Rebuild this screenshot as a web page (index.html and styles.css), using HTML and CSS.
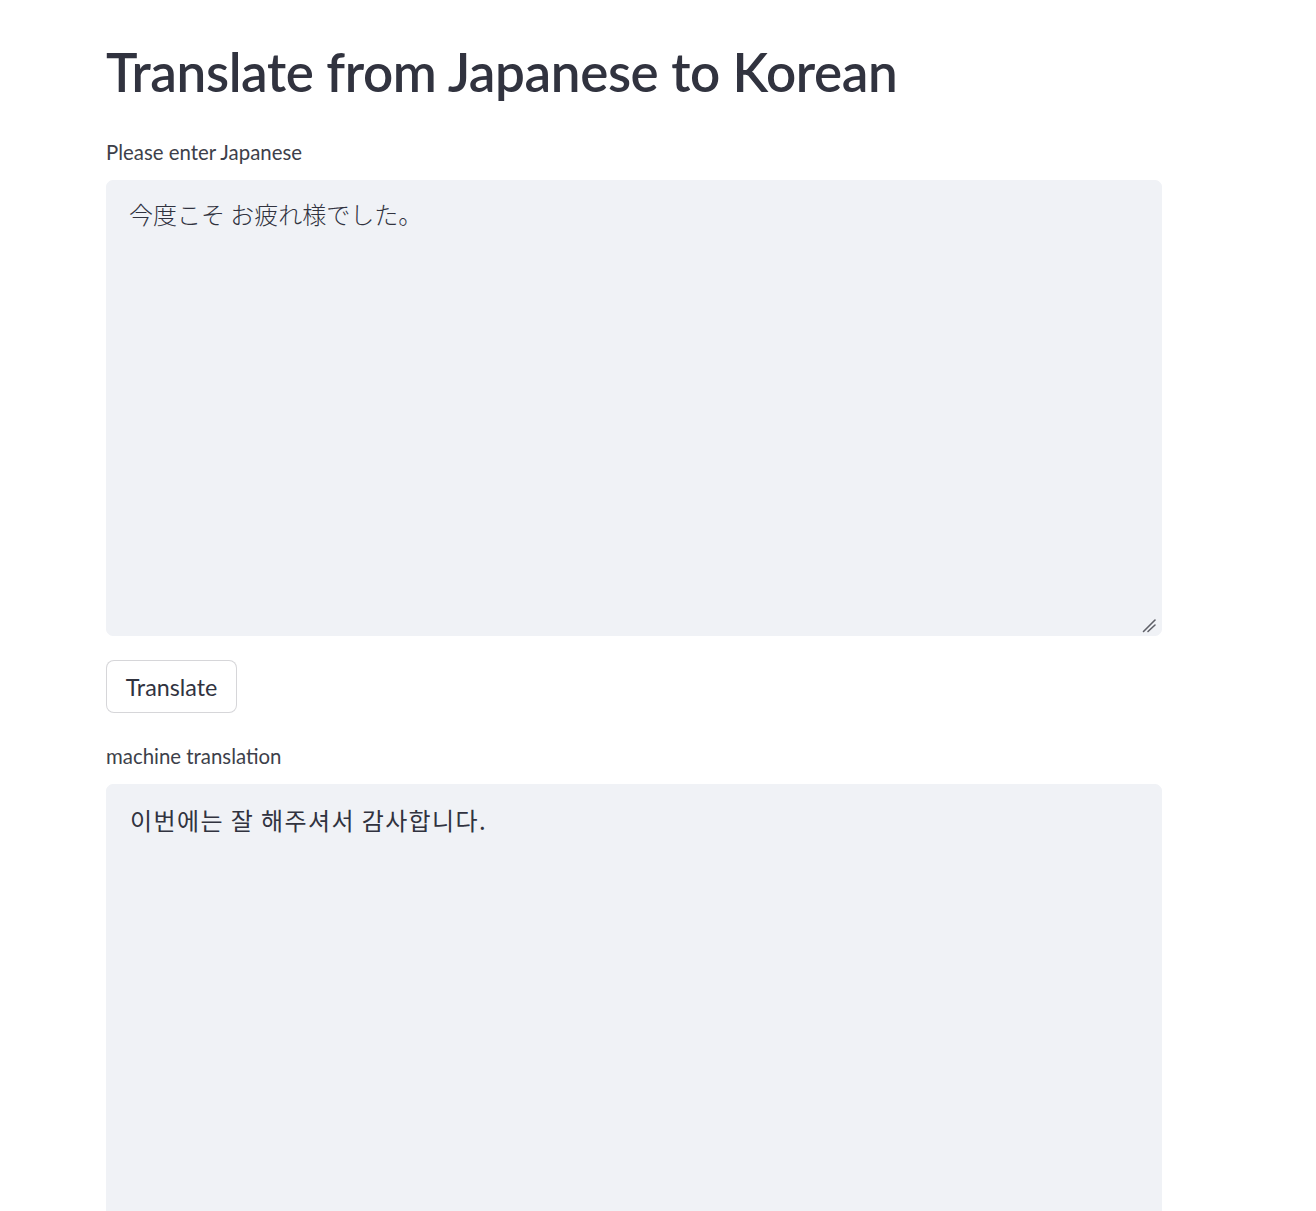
FILE: index.html
```html
<!DOCTYPE html>
<html lang="en">
<head>
<meta charset="utf-8">
<title>Translate from Japanese to Korean</title>
<link rel="stylesheet" href="styles.css">
</head>
<body>
<main class="main">
  <h1 class="title">Translate from Japanese to Korean</h1>
  <div class="field">
    <label class="label" for="src">Please enter Japanese</label>
    <div class="area-wrap">
      <textarea id="src" class="area area-ja">今度こそ お疲れ様でした。</textarea>
      <svg class="grip" width="16" height="16" viewBox="0 0 16 16" aria-hidden="true">
        <line x1="1.5" y1="14.5" x2="13" y2="3" stroke="#5f6068" stroke-width="1.6" stroke-linecap="round"/>
        <line x1="6" y1="14.5" x2="13" y2="8" stroke="#5f6068" stroke-width="1.6" stroke-linecap="round"/>
      </svg>
    </div>
  </div>
  <div class="actions">
    <button class="btn" type="button">Translate</button>
  </div>
  <div class="field">
    <label class="label" for="dst">machine translation</label>
    <div class="area-wrap">
      <textarea id="dst" class="area area-ko">이번에는 잘 해주셔서 감사합니다.</textarea>
    </div>
  </div>
</main>
</body>
</html>
```
FILE: styles.css
```css
html, body {
  margin: 0;
  padding: 0;
  background: #ffffff;
}
body {
  font-family: "Lato", "Liberation Sans", sans-serif;
  color: #31333f;
  overflow: hidden;
}
.main {
  padding: 0 154px 0 106px;
  display: flex;
  flex-direction: column;
}
.title {
  margin: 0;
  padding-top: 40px;
  font-size: 53px;
  font-weight: 600;
  line-height: 64px;
  letter-spacing: -0.4px;
  color: #31333f;
}
.field {
  display: flex;
  flex-direction: column;
}
.label {
  margin-top: 33px;
  font-size: 20.4px;
  line-height: 30px;
  height: 30px;
  font-weight: 400;
  color: #3d3f4a;
}
.area-wrap {
  position: relative;
  margin-top: 13px;
  display: flex;
}
.area {
  box-sizing: border-box;
  width: 100%;
  height: 456px;
  background: #f0f2f6;
  border: 1px solid #f0f2f6;
  border-radius: 7px;
  padding: 15px 22px;
  font-size: 24px;
  line-height: 36px;
  color: #31333f;
  resize: none;
  outline: none;
  display: block;
}
.area-ja {
  font-family: "Noto Sans CJK JP", "Lato", sans-serif;
  font-weight: 300;
}
.area-ko {
  font-family: "Noto Sans CJK KR", "Lato", sans-serif;
  font-weight: 400;
  font-size: 24px;
  letter-spacing: 1.4px;
  padding-top: 17px;
  padding-left: 23px;
}
.grip {
  position: absolute;
  right: 4px;
  bottom: 3px;
}
.actions {
  margin-top: 24px;
  display: flex;
}
.btn {
  width: 131px;
  height: 53px;
  background: #ffffff;
  border: 1px solid rgba(49, 51, 63, 0.2);
  border-radius: 8px;
  font-family: "Lato", "Liberation Sans", sans-serif;
  font-size: 23.3px;
  color: #31333f;
  padding: 0;
}
.actions + .field .label {
  margin-top: 28px;
}
```
